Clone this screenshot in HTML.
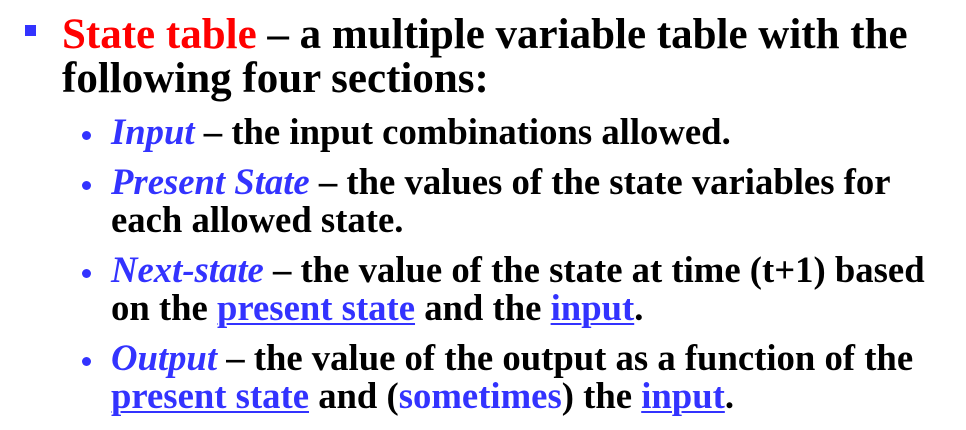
<!DOCTYPE html>
<html><head><style>
body{margin:0;width:966px;height:430px;background:#fff;overflow:hidden;position:relative;font-family:"Liberation Serif",serif;font-weight:bold;color:#000}
.l{position:absolute;white-space:nowrap;line-height:1}
.m{font-size:43px;left:62px}
.s{font-size:36.7px;left:111px}
.b{color:#3333ff}
.r{color:#ff0000}
i{font-style:italic}
u{color:#3333ff;text-decoration:underline;text-decoration-thickness:2px;text-underline-offset:3px}
.dot{position:absolute;width:9px;height:9px;border-radius:50%;background:#3333ff}
.sq{position:absolute;left:25px;top:25px;width:11px;height:11px;background:#3333ff}
</style></head><body>
<div class="sq"></div>
<div class="l m" style="top:13px"><span class="r">State table</span> – a multiple variable table with the</div>
<div class="l m" style="top:57px">following four sections:</div>

<div class="dot" style="left:82px;top:131px"></div>
<div class="l s" style="top:114px"><i class="b">Input</i> – the input combinations allowed.</div>
<div class="dot" style="left:82px;top:181px"></div>
<div class="l s" style="top:164px"><i class="b">Present State</i> – the values of the state variables for</div>
<div class="l s" style="top:202px">each allowed state.</div>
<div class="dot" style="left:82px;top:269px"></div>
<div class="l s" style="top:252px"><i class="b">Next-state</i> – the value of the state at time (t+1) based</div>
<div class="l s" style="top:290px">on the <u>present state</u> and the <u>input</u>.</div>
<div class="dot" style="left:82px;top:357px"></div>
<div class="l s" style="top:340px"><i class="b">Output</i> – the value of the output as a function of the</div>
<div class="l s" style="top:378px"><u>present state</u> and (<span class="b">sometimes</span>) the <u>input</u>.</div>
</body></html>
